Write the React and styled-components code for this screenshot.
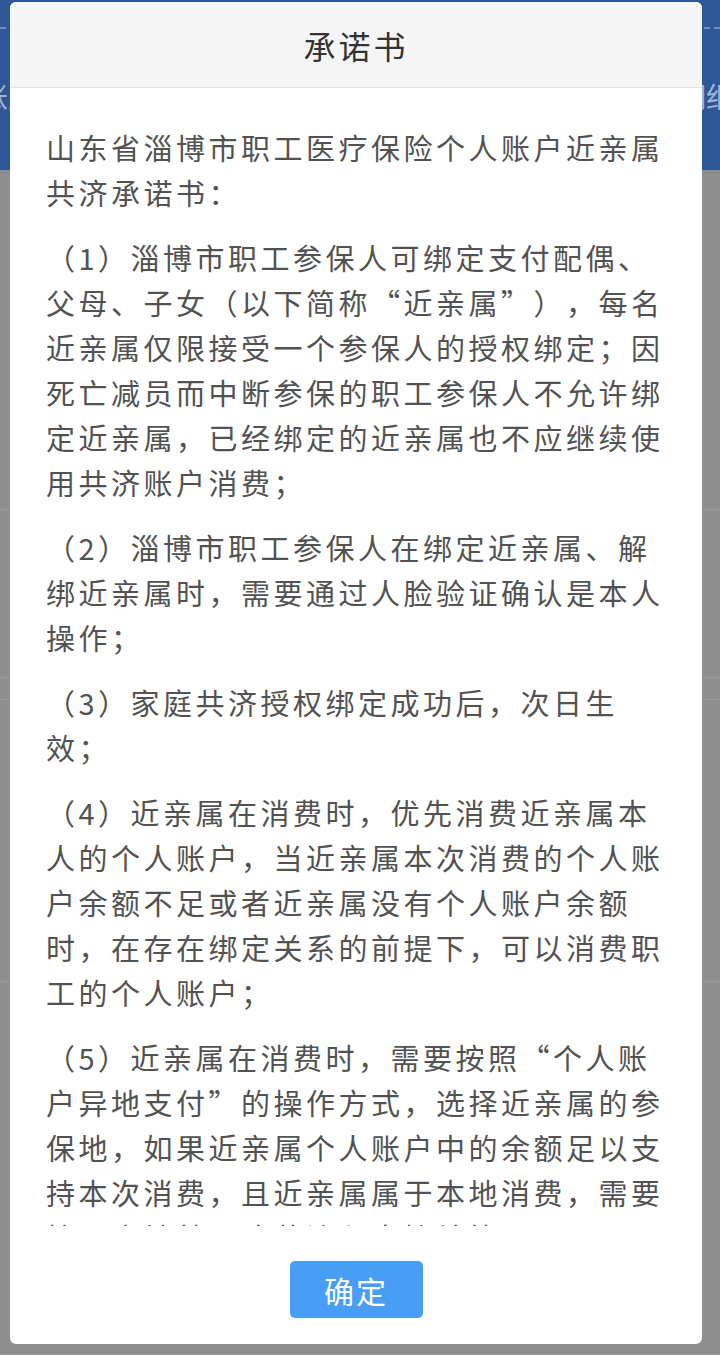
import styled, { createGlobalStyle } from 'styled-components';

const GlobalStyle = createGlobalStyle`
  html, body {
    margin: 0;
    padding: 0;
  }
  body {
    font-family: "Noto Sans CJK SC", "Noto Sans", sans-serif;
    background: #8e8e8e;
  }
`;

const Page = styled.div`
  position: relative;
  width: 720px;
  height: 1355px;
  overflow: hidden;
  background: #8e8e8e;
`;

const TopBar = styled.div`
  height: 170px;
  background: #2d5797;
  display: flex;
  flex-direction: column;
`;

const DashLine = styled.div`
  margin-top: 27px;
  height: 0;
  border-top: 2px dashed #6f8fbf;
`;

const TabRow = styled.div`
  margin-top: 52px;
  display: flex;
  justify-content: space-between;
  font-size: 28px;
  line-height: 30px;
  color: #9fb4d4;
  white-space: nowrap;
`;

const TabLeft = styled.span`
  margin-left: -20px;
`;

const TabRight = styled.span`
  margin-right: -14px;
`;

const BgRow = styled.div`
  height: ${(p) => p.h}px;
  border-bottom: 1px solid #999999;
  box-sizing: border-box;
`;

const Modal = styled.div`
  position: absolute;
  top: 2px;
  left: 10px;
  width: 692px;
  height: 1342px;
  background: #ffffff;
  border-radius: 6px;
  overflow: hidden;
  display: flex;
  flex-direction: column;
`;

const ModalHeader = styled.div`
  height: 86px;
  flex-shrink: 0;
  background: #f5f5f5;
  border-bottom: 1px solid #e4e4e4;
  box-sizing: border-box;
  display: flex;
  align-items: center;
  justify-content: center;
`;

const Title = styled.h2`
  margin: 0;
  font-size: 32px;
  font-weight: 400;
  letter-spacing: 3px;
  color: #333333;
`;

const ModalBody = styled.div`
  height: 1138px;
  flex-shrink: 0;
  overflow: hidden;
  box-sizing: border-box;
  padding: 37px 0 0 36px;
`;

const Paragraph = styled.div`
  margin-bottom: 20px;
`;

const Line = styled.div`
  height: 45px;
  line-height: 45px;
  white-space: nowrap;
  font-size: 29px;
  letter-spacing: 3.5px;
  color: #525252;
  text-spacing-trim: space-all;
`;

const Footer = styled.div`
  flex: 1;
  display: flex;
  justify-content: center;
  align-items: flex-start;
  padding-top: 35px;
`;

const ConfirmButton = styled.button`
  width: 133px;
  height: 57px;
  border: none;
  border-radius: 5px;
  background: #479ef4;
  color: #ffffff;
  font-family: "Noto Sans CJK SC", "Noto Sans", sans-serif;
  font-size: 30px;
  letter-spacing: 2px;
  cursor: pointer;
`;

const paragraphs = [
  ['山东省淄博市职工医疗保险个人账户近亲属', '共济承诺书：'],
  [
    '（1）淄博市职工参保人可绑定支付配偶、',
    '父母、子女（以下简称“近亲属”），每名',
    '近亲属仅限接受一个参保人的授权绑定；因',
    '死亡减员而中断参保的职工参保人不允许绑',
    '定近亲属，已经绑定的近亲属也不应继续使',
    '用共济账户消费；',
  ],
  [
    '（2）淄博市职工参保人在绑定近亲属、解',
    '绑近亲属时，需要通过人脸验证确认是本人',
    '操作；',
  ],
  ['（3）家庭共济授权绑定成功后，次日生', '效；'],
  [
    '（4）近亲属在消费时，优先消费近亲属本',
    '人的个人账户，当近亲属本次消费的个人账',
    '户余额不足或者近亲属没有个人账户余额',
    '时，在存在绑定关系的前提下，可以消费职',
    '工的个人账户；',
  ],
  [
    '（5）近亲属在消费时，需要按照“个人账',
    '户异地支付”的操作方式，选择近亲属的参',
    '保地，如果近亲属个人账户中的余额足以支',
    '持本次消费，且近亲属属于本地消费，需要',
    '按照本地就医购药流程直接结算；',
  ],
];

const App = () => (
  <Page>
    <GlobalStyle />
    <TopBar>
      <DashLine />
      <TabRow>
        <TabLeft>账户</TabLeft>
        <TabRight>明细</TabRight>
      </TabRow>
    </TopBar>
    <BgRow h={340} />
    <BgRow h={168} />
    <BgRow h={22} />
    <BgRow h={282} />
    <BgRow h={373} />

    <Modal>
      <ModalHeader>
        <Title>承诺书</Title>
      </ModalHeader>
      <ModalBody>
        {paragraphs.map((lines, i) => (
          <Paragraph key={i}>
            {lines.map((text, j) => (
              <Line key={j}>{text}</Line>
            ))}
          </Paragraph>
        ))}
      </ModalBody>
      <Footer>
        <ConfirmButton type="button">确定</ConfirmButton>
      </Footer>
    </Modal>
  </Page>
);

export default App;
